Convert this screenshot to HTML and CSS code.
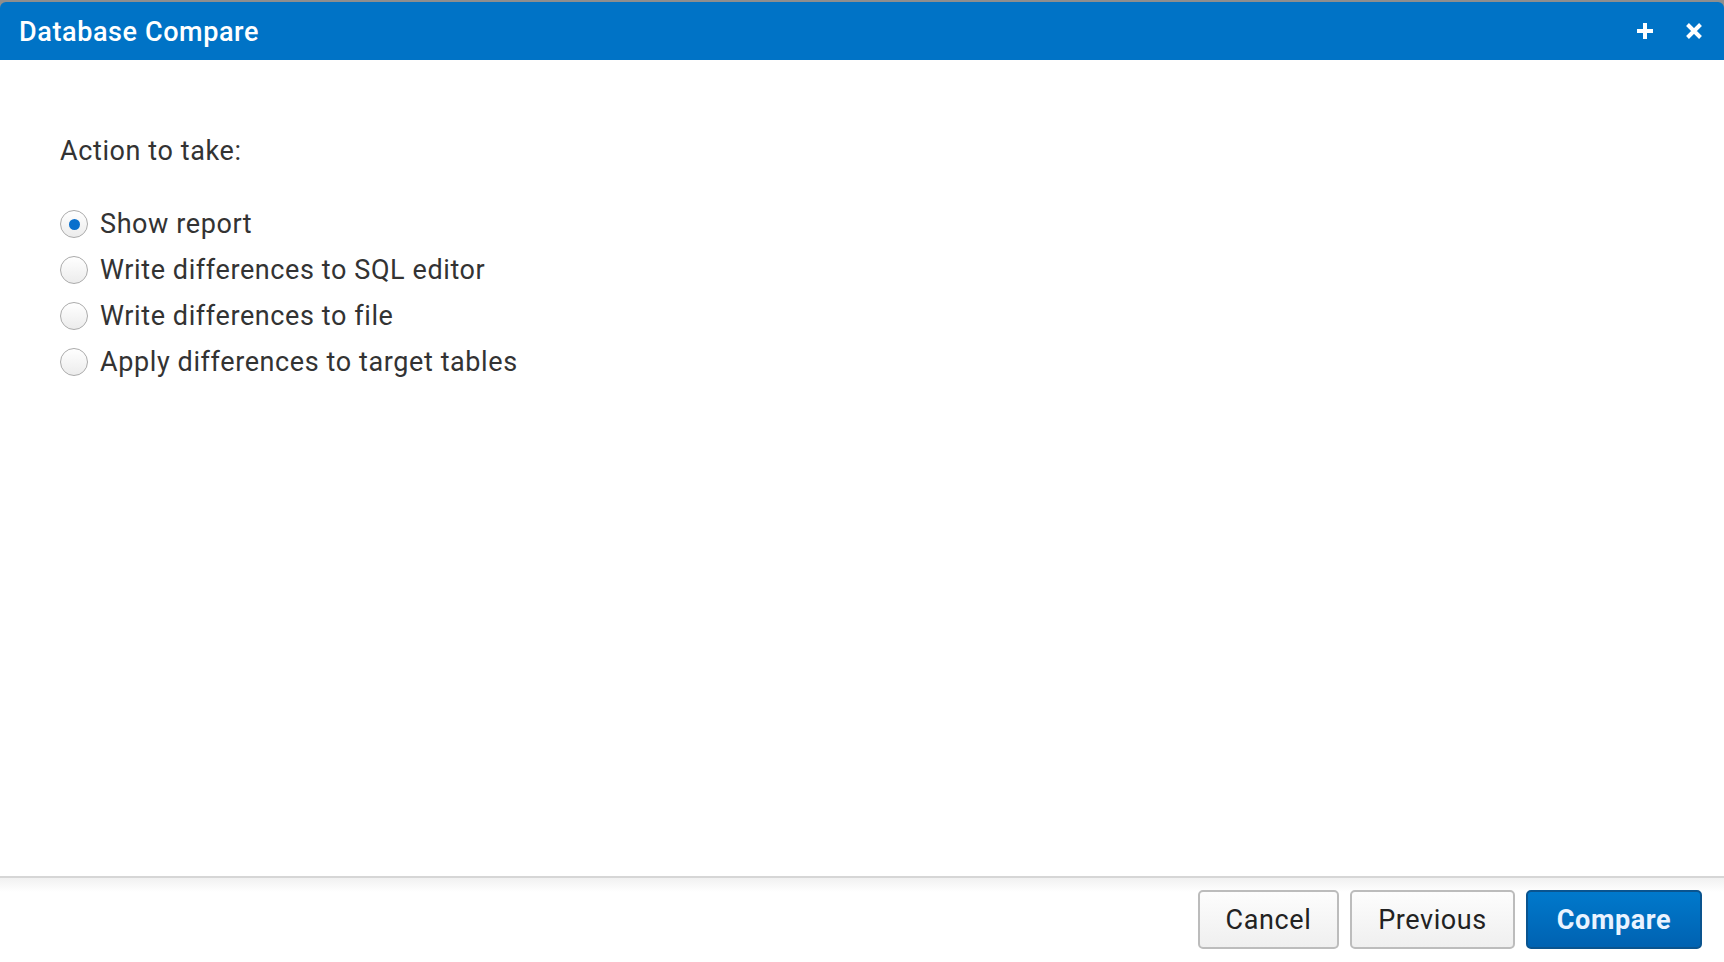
FILE: index.html
```html
<!DOCTYPE html>
<html>
<head>
<meta charset="utf-8">
<title>Database Compare</title>
<link rel="stylesheet" href="styles.css">
</head>
<body>
<div class="dialog">
  <header class="titlebar">
    <h1 class="title">Database Compare</h1>
    <div class="tools">
      <button class="tool" aria-label="Maximize">
        <svg width="20" height="20" viewBox="0 0 20 20"><path d="M10 2v16M2 10h16" stroke="#fff" stroke-width="4" fill="none"/></svg>
      </button>
      <button class="tool" aria-label="Close">
        <svg width="18" height="18" viewBox="0 0 18 18"><path d="M2.5 2.5l13 13M15.5 2.5l-13 13" stroke="#fff" stroke-width="4" fill="none"/></svg>
      </button>
    </div>
  </header>
  <main class="content">
    <div class="label">Action to take:</div>
    <div class="options">
      <label class="option"><span class="radio checked"></span><span>Show report</span></label>
      <label class="option"><span class="radio"></span><span>Write differences to SQL editor</span></label>
      <label class="option"><span class="radio"></span><span>Write differences to file</span></label>
      <label class="option"><span class="radio"></span><span>Apply differences to target tables</span></label>
    </div>
  </main>
  <footer class="footer">
    <button class="btn btn-cancel">Cancel</button>
    <button class="btn btn-prev">Previous</button>
    <button class="btn btn-primary">Compare</button>
  </footer>
</div>
</body>
</html>
```

FILE: styles.css
```css
html, body {
  margin: 0;
  padding: 0;
  height: 100%;
}
body {
  background: #8e8e8e;
  font-family: Roboto, "Liberation Sans", Arial, sans-serif;
  overflow: hidden;
}
.dialog {
  display: flex;
  flex-direction: column;
  height: 100vh;
  padding-top: 2px;
  box-sizing: border-box;
}
.titlebar {
  height: 58px;
  flex: none;
  background: #0073c6;
  border-radius: 6px 6px 0 0;
  display: flex;
  align-items: center;
  justify-content: space-between;
  padding: 0 21px 0 19px;
}
.title {
  margin: 2px 0 0;
  color: #fff;
  font-size: 27px;
  font-weight: 500;
  letter-spacing: 0.6px;
}
.tools {
  display: flex;
  align-items: center;
  gap: 30px;
}
.tool {
  background: none;
  border: 0;
  padding: 0;
  display: flex;
  cursor: pointer;
}
.content {
  flex: 1;
  background: #fff;
  padding: 68px 0 0 60px;
  color: #333;
  font-size: 27px;
  letter-spacing: 0.6px;
}
.label {
  line-height: 46px;
  margin-bottom: 27px;
}
.options {
  display: flex;
  flex-direction: column;
}
.option {
  display: flex;
  align-items: center;
  gap: 12px;
  line-height: 46px;
}
.radio {
  width: 26px;
  height: 26px;
  border: 1.5px solid #ababab;
  border-radius: 50%;
  background: linear-gradient(#ffffff, #ececec);
  display: flex;
  align-items: center;
  justify-content: center;
  flex: none;
}
.radio.checked::after {
  content: "";
  width: 11px;
  height: 11px;
  border-radius: 50%;
  background: #0a6fcc;
}
.footer {
  flex: none;
  height: 86px;
  box-sizing: border-box;
  border-top: 2px solid #d6d6d6;
  background: linear-gradient(#f1f1f1 0, #ffffff 14px, #ffffff 100%);
  display: flex;
  justify-content: flex-end;
  align-items: flex-start;
  gap: 11px;
  padding: 12px 22px 0 0;
}
.btn {
  height: 59px;
  padding: 0;
  font-family: Roboto, "Liberation Sans", Arial, sans-serif;
  font-size: 27px;
  letter-spacing: 0.6px;
  color: #222;
  background: linear-gradient(#fdfdfd, #efefef);
  border: 2px solid #bcbcbc;
  border-radius: 5px;
  cursor: pointer;
}
.btn-cancel {
  width: 141px;
}
.btn-prev {
  width: 165px;
}
.btn-primary {
  width: 176px;
  color: #eaf3ff;
  font-weight: 700;
  background: linear-gradient(#0079cc, #0062b1);
  border-color: #0a548f;
}
```
